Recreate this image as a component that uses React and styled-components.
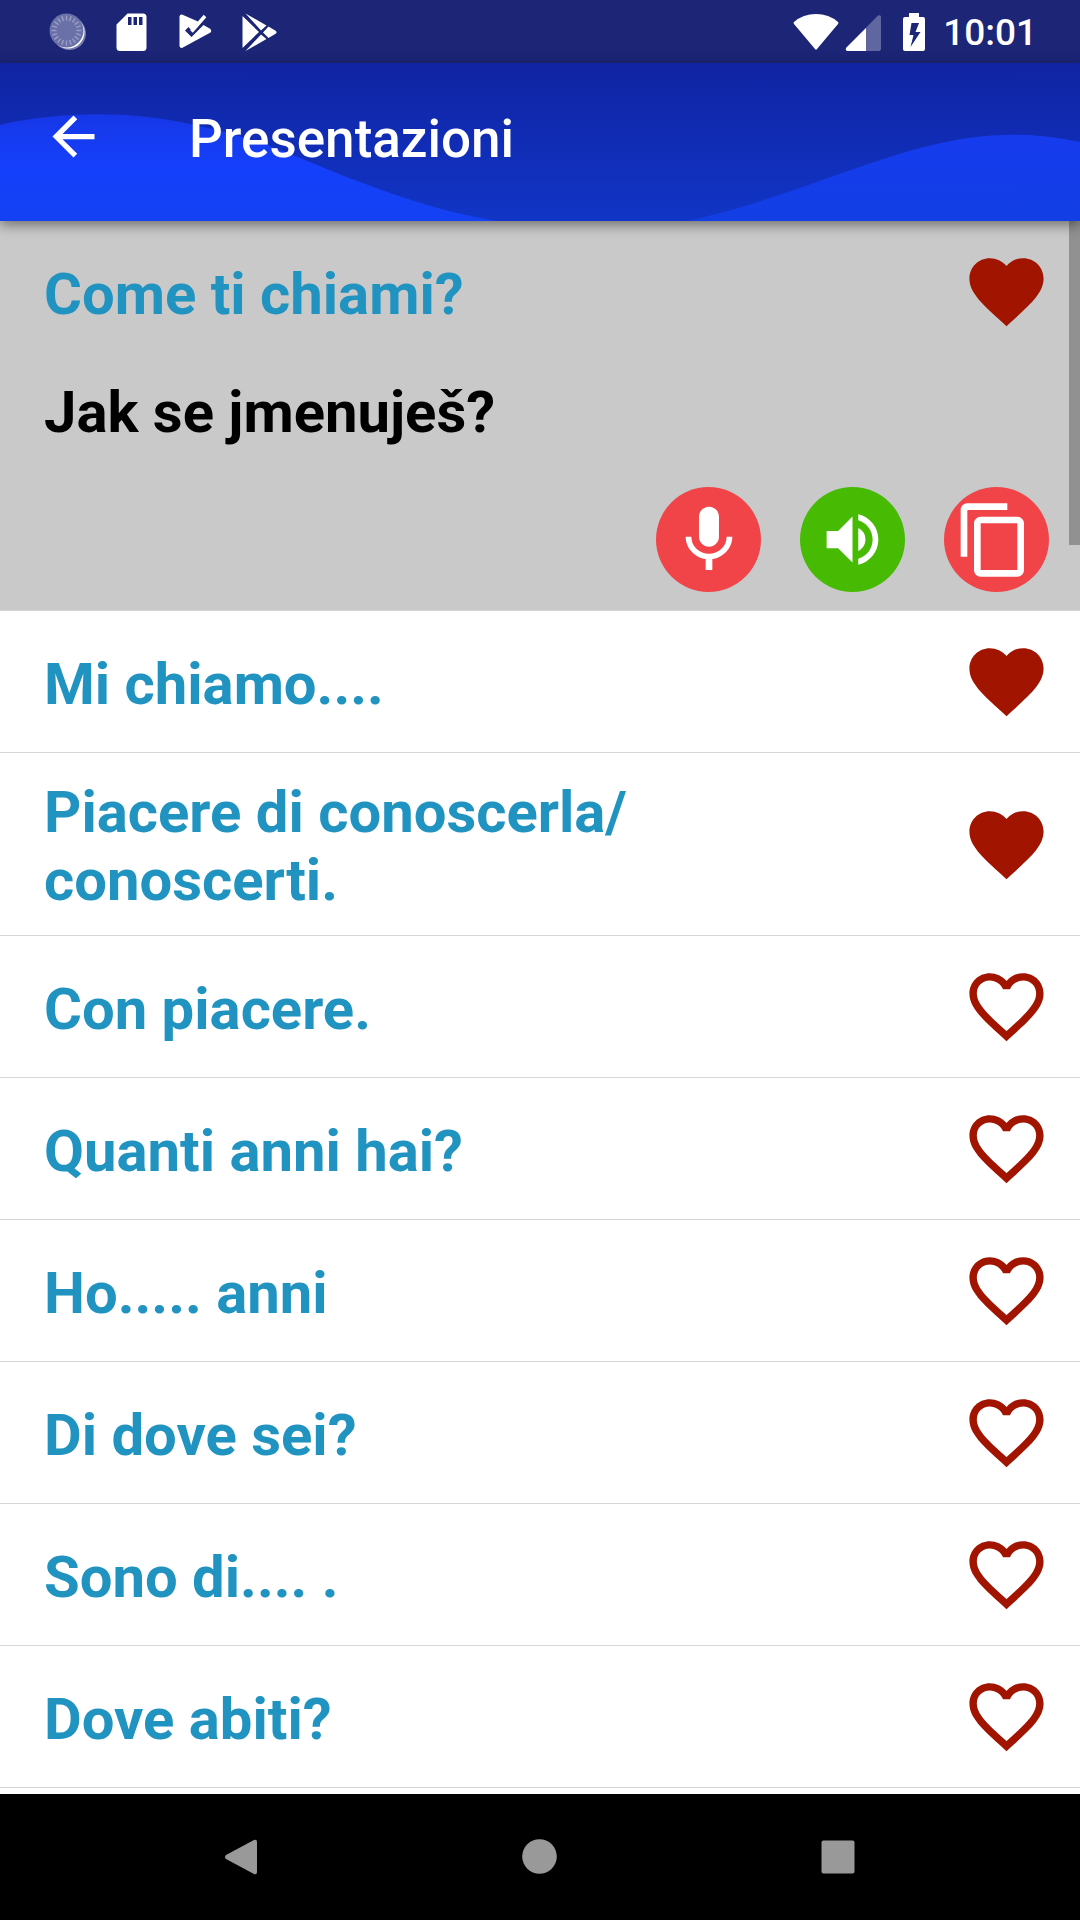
import { useState } from 'react'
import styled, { createGlobalStyle } from 'styled-components'
import { MdArrowBack, MdContentCopy, MdFavorite, MdFavoriteBorder, MdVolumeUp } from 'react-icons/md'

const initialPhrases = [
    { id: 1, text: 'Come ti chiami?', translation: 'Jak se jmenuješ?', favorite: true },
    { id: 2, text: 'Mi chiamo....', favorite: true },
    { id: 3, text: 'Piacere di conoscerla/ conoscerti.', favorite: true },
    { id: 4, text: 'Con piacere.', favorite: false },
    { id: 5, text: 'Quanti anni hai?', favorite: false },
    { id: 6, text: 'Ho..... anni', favorite: false },
    { id: 7, text: 'Di dove sei?', favorite: false },
    { id: 8, text: 'Sono di.... .', favorite: false },
    { id: 9, text: 'Dove abiti?', favorite: false },
]

const ticks = Array.from({ length: 20 }, (_, i) => i * 18)

const StatusIcons = () => (
    <NotificationGroup>
        <svg width="38" height="40" viewBox="-1 -1 38 40">
            <circle cx="20.5" cy="20.5" r="16.5" fill="#fff" opacity=".4" />
            <circle cx="19" cy="19" r="16.5" fill="#fff" />
            <circle cx="17.5" cy="17.5" r="17" fill="#6a70a8" />
            {ticks.map(angle => (
                <path key={angle} d="M17.5 2.5v5" stroke="#9a9ec6" strokeWidth="1.4" transform={`rotate(${angle} 17.5 17.5)`} />
            ))}
        </svg>
        <svg width="31" height="40" viewBox="0 -1 31 40">
            <path fill="#fff" fillRule="evenodd" d="M11.500 .5H27Q30.500 .5 30.500 4V34.500Q30.500 38 27 38H4Q.5 38 .5 34.500V11.500ZM12 4V12H15.500V4ZM17.500 4V12H21V4ZM23 4V12H26.500V4Z" />
        </svg>
        <svg width="35" height="40" viewBox="-2 0 35 40">
            <path fill="#fff" d="M3 2.500L19 9.500 12.500 18.500 9.500 15 6 18.500 12.500 25 24.500 13 31.500 17Q33 19 31.500 20.500L3 36Q.5 36 .5 34V4.500Q1 2 3 2.500Z" />
            <path fill="none" stroke="#fff" strokeWidth="3.500" d="M12.500 19.500L26 4" />
        </svg>
        <svg width="35" height="40" viewBox="0 -1 35 40">
            <path fill="#fff" d="M.5 3L17 19 .5 35ZM3.500 .5L24.500 12.500 19 17.500ZM3.500 38L19 21.500 24.500 26ZM26.500 13.500L34 18Q35 19.500 34 20.500L26.500 25 21 19.500Z" />
        </svg>
    </NotificationGroup>
)

const SystemIcons = () => (
    <SystemGroup>
        <svg width="46" height="38" viewBox="0 0 46 38">
            <path fill="#fff" d="M1 9Q10 1 23 1T45 9Q46 10 45 11L24 36Q23 37.500 22 36L1 11Q0 10 1 9Z" />
        </svg>
        <svg width="36" height="38" viewBox="0 0 36 38">
            <path fill="#fff" opacity=".3" d="M33 2.500Q36 1.500 36 4V35.500Q36 38 34 38H2Q0 37 1 35Z" />
            <path fill="#fff" d="M21 15V38H2Q0 37 1 35Z" />
        </svg>
        <svg width="22" height="38" viewBox="0 0 22 38">
            <path fill="#fff" fillRule="evenodd" d="M6 0H16V4H20Q22 4 22 6V36Q22 38 20 38H2Q0 38 0 36V6Q0 4 2 4H6ZM8.500 10L6.500 22H10.500L7.500 34 17.500 19H12.500L16 10Z" />
        </svg>
        <Clock>10:01</Clock>
    </SystemGroup>
)

const Phrase = ({ phrase, onToggle }) => (
    <PhraseItem $open={Boolean(phrase.translation)}>
        <PhraseRow>
            <PhraseText>{phrase.text}</PhraseText>
            <FavoriteButton type="button" aria-label="Preferito" aria-pressed={phrase.favorite} onClick={onToggle}>
                {phrase.favorite ? <MdFavorite /> : <MdFavoriteBorder />}
            </FavoriteButton>
        </PhraseRow>
        {phrase.translation && (
            <>
                <Translation lang="cs">{phrase.translation}</Translation>
                <Actions>
                    <RoundButton type="button" aria-label="Registra">
                        <svg width="80" height="80" viewBox="0 0 24 24">
                            <path d="M12 14c1.660 0 2.990-1.340 2.990-3L15 5c0-1.660-1.340-3-3-3S9 3.340 9 5v6c0 1.660 1.340 3 3 3zm5.300-3c0 3-2.540 5.100-5.300 5.100S6.700 14 6.700 11H5c0 3.410 2.720 6.230 6 6.720V21h2v-3.280c3.280-.48 6-3.300 6-6.720h-1.700z" />
                        </svg>
                    </RoundButton>
                    <RoundButton type="button" aria-label="Ascolta" $color="#47ba04">
                        <MdVolumeUp size={69} />
                    </RoundButton>
                    <RoundButton type="button" aria-label="Copia">
                        <MdContentCopy size={80} viewBox="0.9 0 24 24" />
                    </RoundButton>
                </Actions>
            </>
        )}
    </PhraseItem>
)

const App = () => {
    const [phrases, setPhrases] = useState(initialPhrases)

    const toggleFavorite = id => {
        setPhrases(phrases.map(p => (p.id === id ? { ...p, favorite: !p.favorite } : p)))
    }

    return (
        <Screen>
            <GlobalStyle />
            <StatusBar>
                <StatusIcons />
                <SystemIcons />
            </StatusBar>
            <AppBar>
                <Waves viewBox="0 0 1080 158" preserveAspectRatio="none" aria-hidden="true">
                    <defs>
                        <linearGradient id="wave" x1="0" y1="0" x2="0" y2="1">
                            <stop offset="0" stopColor="#1637e6" />
                            <stop offset=".5" stopColor="#1540fc" />
                            <stop offset="1" stopColor="#1441f2" />
                        </linearGradient>
                        <linearGradient id="waveRight" x1="0" y1="0" x2="0" y2="1">
                            <stop offset="0" stopColor="#163bee" />
                            <stop offset="1" stopColor="#123fe4" />
                        </linearGradient>
                    </defs>
                    <path fill="url(#wave)" d="M0 62C60 48 130 48 190 61C270 77 300 97 360 119C410 138 450 150 497 158H0Z" />
                    <path fill="url(#waveRight)" d="M688 158C770 140 850 104 920 85C980 69 1030 68 1080 79V158Z" />
                </Waves>
                <BackLink href="#" aria-label="Indietro">
                    <MdArrowBack size={63} />
                </BackLink>
                <Title>Presentazioni</Title>
            </AppBar>
            <Content>
                <PhraseList>
                    {phrases.map(phrase => (
                        <Phrase key={phrase.id} phrase={phrase} onToggle={() => toggleFavorite(phrase.id)} />
                    ))}
                </PhraseList>
                <ScrollThumb />
            </Content>
            <NavBar>
                <NavButton type="button" aria-label="Indietro">
                    <svg width="36" height="36" viewBox="0 0 36 36">
                        <path d="M30 1Q33 0 33 3V33Q33 36 30 35L2 20Q0 18 2 16Z" />
                    </svg>
                </NavButton>
                <NavButton type="button" aria-label="Home">
                    <svg width="36" height="36" viewBox="0 0 36 36">
                        <circle cx="17.500" cy="17.500" r="17.300" />
                    </svg>
                </NavButton>
                <NavButton type="button" aria-label="Recenti">
                    <svg width="36" height="36" viewBox="0 0 36 36">
                        <rect x="1.500" y="1.500" width="33" height="33" rx="2" />
                    </svg>
                </NavButton>
            </NavBar>
        </Screen>
    )
}

export default App

const GlobalStyle = createGlobalStyle`
    * {
        box-sizing: border-box;
    }

    body {
        margin: 0;
        font-family: Roboto, sans-serif;
        background-color: #fff;
    }

    button {
        padding: 0;
        border: none;
        background: none;
        cursor: pointer;
    }

    svg {
        display: block;
    }
`

const Screen = styled.div`
    display: flex;
    flex-direction: column;
    min-height: 100vh;
`

const StatusBar = styled.div`
    display: flex;
    justify-content: space-between;
    align-items: center;
    height: 63px;
    padding: 0 43px 0 48px;
    background-color: #1c2576;
`

const NotificationGroup = styled.div`
    display: flex;
    align-items: center;
    gap: 30px;
`

const SystemGroup = styled.div`
    display: flex;
    align-items: center;
    gap: 6px;

    svg:nth-child(3) {
        margin-left: 16px;
    }
`

const Clock = styled.span`
    margin-left: 12px;
    padding-top: 3px;
    font-size: 37px;
    font-weight: 500;
    line-height: 44px;
    color: #fff;
`

const AppBar = styled.header`
    position: relative;
    z-index: 1;
    display: flex;
    align-items: center;
    height: 158px;
    padding: 0 42px 12px;
    background: linear-gradient(#1024a3, #1135c6);
    box-shadow: 0 4px 12px rgba(0, 0, 0, .45);
`

const Waves = styled.svg`
    position: absolute;
    inset: 0;
    width: 100%;
    height: 100%;
`

const BackLink = styled.a`
    position: relative;
    color: #fff;
`

const Title = styled.h1`
    position: relative;
    margin: 0 0 0 84px;
    padding-top: 6px;
    font-size: 53px;
    font-weight: 500;
    line-height: 62px;
    color: #fff;
`

const Content = styled.main`
    position: relative;
    flex: 1;
`

const PhraseList = styled.ul`
    margin: 0;
    padding: 0;
    list-style: none;
`

const PhraseItem = styled.li`
    border-bottom: 1px solid #d6d6d6;
    background-color: ${({ $open }) => ($open ? '#c9c9c9' : '#fff')};
`

const PhraseRow = styled.div`
    display: flex;
    justify-content: space-between;
    align-items: center;
    min-height: 141px;
    padding: 0 29px 0 44px;
`

const PhraseText = styled.p`
    max-width: 640px;
    margin: 0;
    padding: 25px 0 21px;
    font-size: 58px;
    font-weight: 700;
    line-height: 68px;
    color: #2093c0;
`

const FavoriteButton = styled.button`
    flex: none;
    font-size: 89px;
    color: #a01400;
`

const Translation = styled.p`
    margin: 0;
    padding: 16px 44px 0;
    font-size: 58px;
    font-weight: 700;
    line-height: 68px;
    color: #000;
`

const Actions = styled.div`
    display: flex;
    justify-content: flex-end;
    gap: 39px;
    padding: 41px 31px 18px;
`

const RoundButton = styled.button`
    display: flex;
    justify-content: center;
    align-items: center;
    width: 105px;
    height: 105px;
    border-radius: 50%;
    background-color: ${({ $color }) => $color || '#f04448'};
    color: #fff;
    fill: #fff;
`

const ScrollThumb = styled.div`
    position: absolute;
    top: 0;
    right: 0;
    width: 11px;
    height: 324px;
    background-color: rgba(0, 0, 0, .28);
`

const NavBar = styled.nav`
    display: flex;
    justify-content: center;
    gap: 262px;
    padding: 45px 0;
    background-color: #000;
`

const NavButton = styled.button`
    fill: #999;
`
